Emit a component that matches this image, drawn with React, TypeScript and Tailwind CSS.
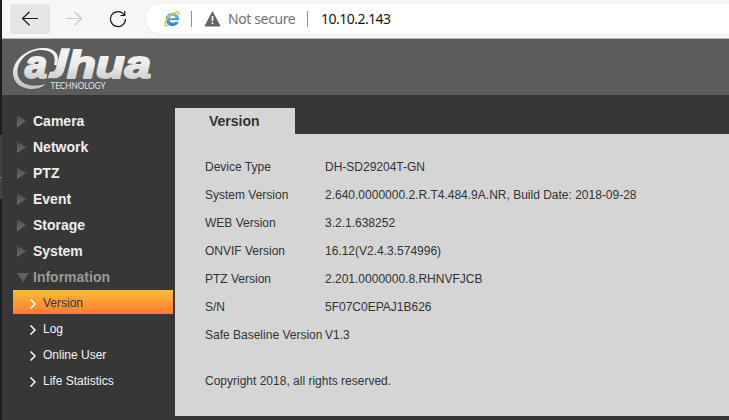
const menu = ["Camera", "Network", "PTZ", "Event", "Storage", "System"];
const pages = ["Version", "Log", "Online User", "Life Statistics"];
const details: [string, string][] = [
  ["Device Type", "DH-SD29204T-GN"],
  ["System Version", "2.640.0000000.2.R.T4.484.9A.NR, Build Date: 2018-09-28"],
  ["WEB Version", "3.2.1.638252"],
  ["ONVIF Version", "16.12(V2.4.3.574996)"],
  ["PTZ Version", "2.201.0000000.8.RHNVFJCB"],
  ["S/N", "5F07C0EPAJ1B626"],
  ["Safe Baseline Version", "V1.3"],
];

function BrowserBar() {
  return (
    <div className="flex h-[39px] items-start overflow-hidden border-b border-[#b4b7b5] bg-[#f7f7f7] pt-1 pl-2 font-['Noto_Sans',sans-serif] text-[14px]">
      <div className="flex h-[30px] w-10 shrink-0 items-center justify-center rounded-[2px] bg-[#e5e5e5]">
        <svg width="18" height="16" viewBox="0 0 18 16" fill="none" stroke="#1b1b1b" strokeWidth="1.2">
          <path d="M17 7.5H1.5M8.5.7 1.5 7.5l7 6.8" />
        </svg>
      </div>
      <div className="flex h-[30px] w-12 shrink-0 items-center justify-center">
        <svg width="18" height="16" viewBox="0 0 18 16" fill="none" stroke="#c8c8c8" strokeWidth="1.2">
          <path d="M1 7.5h15.5M9.5.7l7 6.8-7 6.8" />
        </svg>
      </div>
      <div className="flex h-[30px] w-10 shrink-0 items-center justify-center">
        <svg width="18" height="18" viewBox="0 0 18 18" fill="none" stroke="#1b1b1b" strokeWidth="1.2">
          <path d="M15.300 5A7.500 7.500 0 1 0 16.500 9M15.800 1v4.500H11.500" />
        </svg>
      </div>
      <div className="ml-2 flex h-[30px] flex-1 items-center rounded-l-full bg-white pl-[18px] shadow-[0_0_3px_#e4e4e4]">
        <svg width="17" height="16" viewBox="0 0 17 16" fill="none">
          <defs>
            <linearGradient id="blue" x1="0" y1="0" x2="0" y2="1">
              <stop stopColor="#69c5ef" />
              <stop offset="1" stopColor="#2f7fcc" />
            </linearGradient>
          </defs>
          <path d="M15.200 9.300H5.600c.2 1.500 1.300 2.500 3 2.500 1.200 0 2-.4 2.400-1.100h3.900c-.9 2.600-3.200 4.300-6.300 4.300-4.100 0-6.800-2.700-6.800-6.500s2.700-6.700 6.700-6.700 6.700 2.800 6.700 7.500ZM5.700 6.900h5.700c-.2-1.300-1.200-2.100-2.800-2.100s-2.600.8-2.900 2.100Z" fill="url(#blue)" />
          <path d="M3.800 14.300C-.8 16.500.8 9.200 6 4.800 10.800.7 16-.5 14.800 3.800" stroke="#f2bf2b" strokeWidth="1.500" />
        </svg>
        <span className="ml-[10px] h-4 w-px bg-[#929292]" />
        <svg className="ml-3" width="17" height="16" viewBox="0 0 17 16">
          <path d="M8.500.800 16 15H1Z" fill="#666" stroke="#666" strokeLinejoin="round" />
          <path d="M8.500 5v5M8.500 11.300v1.700" stroke="#fff" strokeWidth="1.500" />
        </svg>
        <span className="-mt-px ml-[7px] w-[79px] whitespace-nowrap tracking-[-0.38px] text-[#707070]">Not secure</span>
        <span className="h-4 w-px bg-[#929292]" />
        <span className="-mt-px ml-[13px] tracking-[-0.52px] text-[#161616]">10.10.2.143</span>
      </div>
    </div>
  );
}

function Logo() {
  return (
    <svg width="144" height="44" viewBox="12 47 144 44" className="overflow-visible font-['Liberation_Sans',sans-serif]">
      <defs>
        <linearGradient id="silver" gradientUnits="userSpaceOnUse" x1="0" y1="48" x2="0" y2="89">
          <stop stopColor="#f4f4f4" />
          <stop offset=".4" stopColor="#ededed" />
          <stop offset=".8" stopColor="#cbcbcb" />
          <stop offset="1" stopColor="#c2c2c2" />
        </linearGradient>
      </defs>
      <path d="M57 65C61 53 53 47.500 42 48 26 49 13 60 13 73c0 11 10 17 22 15.800 5-.6 8-2.300 10.500-4.800C31 88.500 17.500 84 17.500 72 17.500 60 29 50 41 50c10 0 16 5 13 15Z" fill="url(#silver)" />
      <g fill="url(#silver)" stroke="url(#silver)" strokeLinejoin="round" fontWeight="bold" fontStyle="italic">
        <text x="25" y="77.500" fontSize="38" strokeWidth="2" textLength="22" lengthAdjust="spacingAndGlyphs">a</text>
        <path d="M61.500 48.500H70L64 70c-1.500 5.500-4.500 8-10 8h-6l2-6h1.500c2.500 0 3.800-1 4.500-3.500Z" strokeWidth=".5" />
        <text x="67" y="77.500" fontSize="39" strokeWidth="2" textLength="84" lengthAdjust="spacingAndGlyphs">hua</text>
      </g>
      <text x="50.500" y="88.500" fontSize="9" textLength="55" lengthAdjust="spacingAndGlyphs" fill="#e4e4e4" className="font-['Lato',sans-serif]">TECHNOLOGY</text>
    </svg>
  );
}

function Sidebar() {
  return (
    <nav className="w-[173px] shrink-0 pt-[13px]">
      {menu.map((name) => (
        <div key={name} className="flex h-[26px] items-center pl-[15px] text-[14px] font-bold text-[#eee]">
          <svg width="9" height="12" viewBox="0 0 9 12" className="mr-[7px]">
            <defs>
              <linearGradient id="arrow" x2="0" y2="1">
                <stop stopColor="#484848" />
                <stop offset="1" stopColor="#707070" />
              </linearGradient>
            </defs>
            <path d="M0 0 9 6 0 12Z" fill="url(#arrow)" />
          </svg>
          {name}
        </div>
      ))}
      <div className="flex h-[26px] items-center pl-[15px] text-[14px] font-bold text-[#999]">
        <svg width="12" height="9" viewBox="0 0 12 9" className="mr-1">
          <path d="M0 0H12L6 9Z" fill="#645f55" />
        </svg>
        Information
      </div>
      {pages.map((name, i) => (
        <div key={name} className="flex h-[26px] items-start pl-[11px] text-[12px]">
          <div
            className={
              "flex h-6 w-40 items-center pl-[17px] " +
              (i === 0 ? "bg-linear-to-b from-[#ffba38] to-[#ff7936] text-[#333]" : "text-[#f4f4f4]")
            }
          >
            <svg width="6" height="10" viewBox="0 0 6 10" className="mt-[3px] mr-[7px]" fill="none" stroke="#fff" strokeWidth="1.500">
              <path d="m.5.500 4.500 4.500L.5 9.500" />
            </svg>
            <span className="pt-0.5">{name}</span>
          </div>
        </div>
      ))}
    </nav>
  );
}

export default function App() {
  return (
    <div className="flex h-[420px] w-[729px] overflow-hidden bg-[#373737] font-['Liberation_Sans',Arial,sans-serif]">
      <div className="w-0.5 shrink-0 bg-[#1e1e1e] pt-[135px]">
        <div className="h-16 border-t-[42px] border-b-[21px] border-[#424242] bg-[#777]" />
      </div>
      <div className="flex min-w-0 flex-1 flex-col">
        <BrowserBar />
        <header className="h-14 shrink-0 bg-[#5c5c5c] pt-2 pl-[10px]">
          <Logo />
        </header>
        <div className="flex min-h-0 flex-1">
          <Sidebar />
          <main className="min-w-0 flex-1 pt-[13px] text-[#333]">
            <h1 className="flex h-[26px] w-[120px] items-center bg-[#d5d5d5] pl-[34px] text-[14px] font-bold">Version</h1>
            <section className="h-[282px] bg-[#d5d5d5] pt-[19px] pl-[30px] text-[12px]">
              {details.map(([label, value]) => (
                <div key={label} className="flex h-7 items-center whitespace-nowrap">
                  <span className="w-[120px]">{label}</span>
                  <span>{value}</span>
                </div>
              ))}
              <p className="mt-[18px] flex h-7 items-center">Copyright 2018, all rights reserved.</p>
            </section>
          </main>
        </div>
      </div>
    </div>
  );
}
